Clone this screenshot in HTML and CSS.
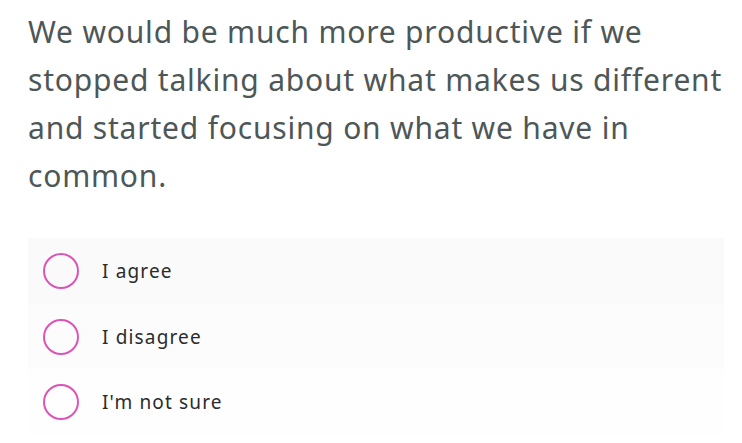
FILE: index.html
```html
<!DOCTYPE html>
<html>
<head>
<meta charset="utf-8">
<link rel="stylesheet" href="styles.css">
</head>
<body>
<main class="poll">
  <h1 class="question">We would be much more productive if we stopped talking about what makes us different and started focusing on what we have in common.</h1>
  <ul class="options">
    <li class="option option-1"><span class="radio"></span><span class="label">I agree</span></li>
    <li class="option option-2"><span class="radio"></span><span class="label">I disagree</span></li>
    <li class="option option-3"><span class="radio"></span><span class="label">I'm not sure</span></li>
  </ul>
</main>
</body>
</html>
```
FILE: styles.css
```css
html, body {
  margin: 0;
  padding: 0;
  background: #ffffff;
}
.poll {
  padding: 8px 18px 0 28px;
  font-family: "Noto Sans", "DejaVu Sans", sans-serif;
}
.question {
  margin: 0;
  font-weight: 400;
  font-size: 30px;
  line-height: 48px;
  color: #4e5757;
  letter-spacing: 0.8px;
}
.options {
  list-style: none;
  margin: 38px 0 0 0;
  padding: 0;
}
.option {
  display: flex;
  align-items: center;
  height: 66px;
  padding-left: 15px;
  gap: 23px;
}
.option-1 { background: #fafafa; }
.option-2 { background: #fcfcfc; height: 65px; }
.option-3 { background: #fefefe; }
.radio {
  width: 32px;
  height: 32px;
  border: 2px solid #db55b9;
  border-radius: 50%;
  flex: none;
}
.label {
  font-size: 19px;
  color: #2b2b2b;
  letter-spacing: 1.15px;
}
```
